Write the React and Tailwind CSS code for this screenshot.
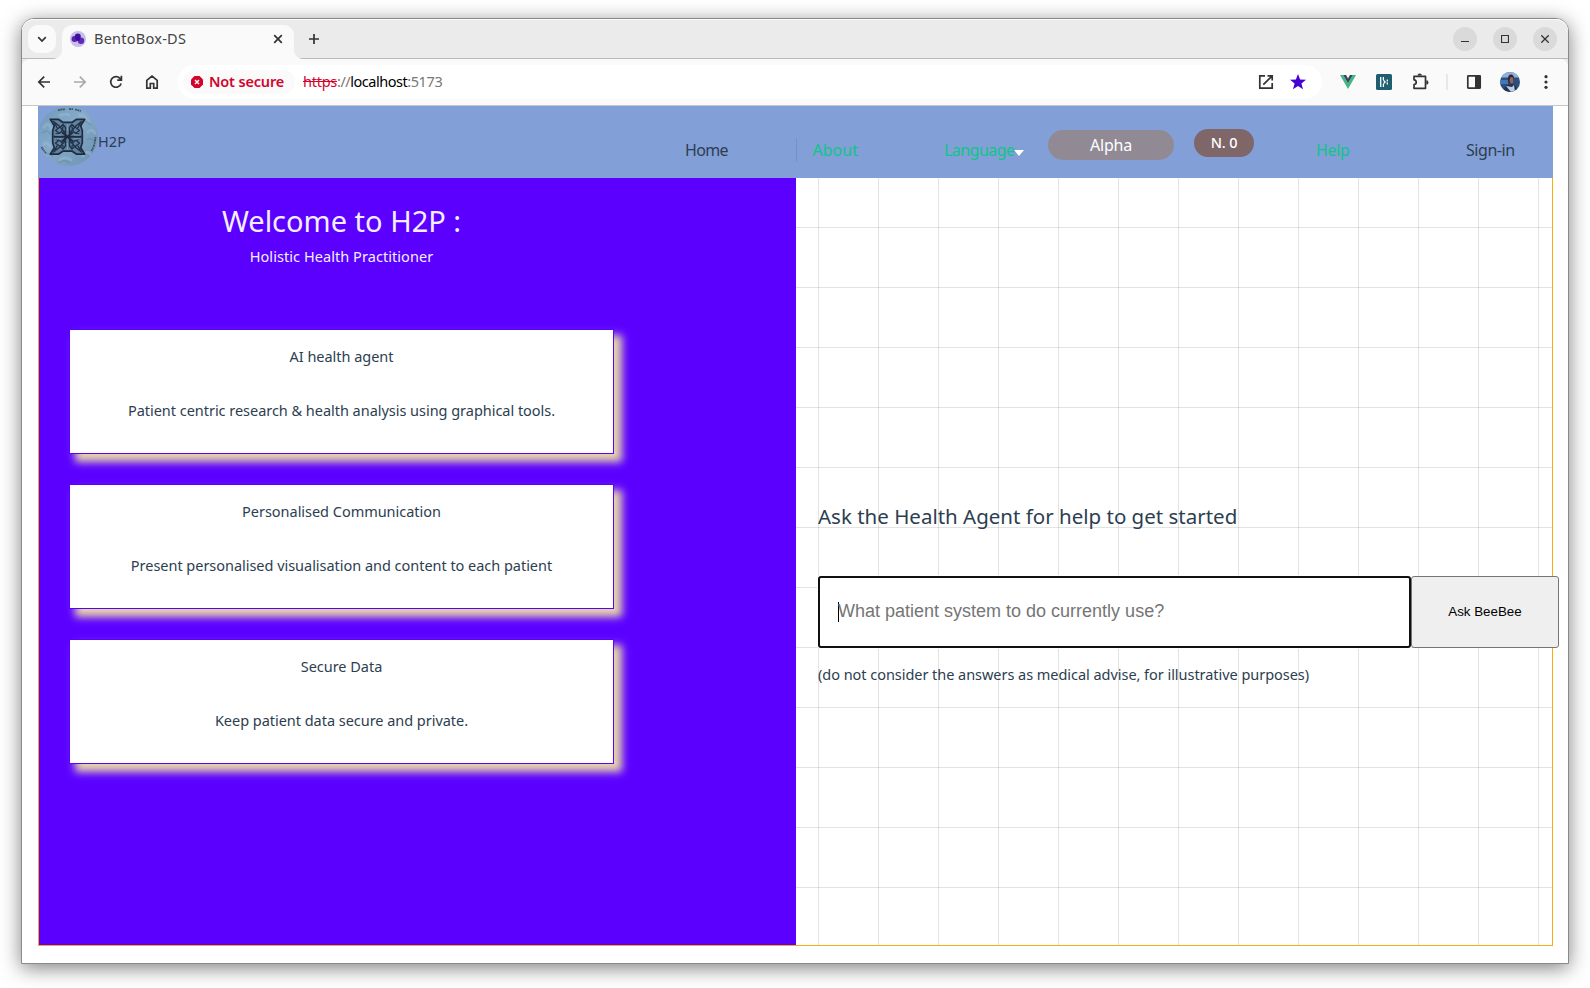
import React from "react";

const stroke = { fill: "none", stroke: "currentColor", strokeWidth: 1.7 };

function Favicon() {
  return (
    <svg className="h-4 w-4 shrink-0" viewBox="0 0 16 16">
      <circle cx="8" cy="8" r="8" fill="#c9bdea" />
      <circle cx="4.600" cy="8" r="3" fill="#5a22b4" />
      <circle cx="7.800" cy="5.600" r="3" fill="#43149a" />
      <circle cx="11" cy="9.800" r="3.200" fill="#5f2bb8" />
      <circle cx="8" cy="7.800" r="2.300" fill="#3f0c9c" />
    </svg>
  );
}

function TabStrip() {
  return (
    <div className="flex h-[40px] items-start rounded-t-[12px] border-b border-[#b9b9b9] bg-[#ebebeb] pl-[6px] shadow-[inset_0_1px_0_#fafafa]">
      <div className="mt-[6px] flex h-7 w-7 items-center justify-center rounded-[10px] bg-[#fafafa] text-[#333]">
        <svg className="h-3 w-3" viewBox="0 0 12 12">
          <path d="M2.2 4.2 6 8l3.8-3.8" {...stroke} />
        </svg>
      </div>
      <div className="relative ml-[6px] mt-[6px] flex h-[34px] w-[232px] items-center rounded-t-[10px] bg-[#fafafa] pb-[6px] pl-2">
        <svg className="absolute -left-[9px] bottom-0 h-[9px] w-[9px] text-[#fafafa]" viewBox="0 0 9 9">
          <path d="M9 0v9H0C5 9 9 5 9 0z" fill="currentColor" />
        </svg>
        <svg className="absolute -right-[9px] bottom-0 h-[9px] w-[9px] text-[#fafafa]" viewBox="0 0 9 9">
          <path d="M0 0v9h9C4 9 0 5 0 0z" fill="currentColor" />
        </svg>
        <Favicon />
        <span className="-mt-[2px] ml-2 text-[14.5px] leading-5 tracking-[0.25px] text-[#444]">BentoBox-DS</span>
        <svg className="ml-auto mr-[11px] h-[10px] w-[10px] text-[#333]" viewBox="0 0 10 10">
          <path d="m1.200 1.200 7.600 7.600m0-7.600L1.200 8.800" {...stroke} />
        </svg>
      </div>
      <svg className="ml-[15px] mt-[15px] h-[10px] w-[10px] text-[#333]" viewBox="0 0 10 10">
        <path d="M5 0v10M0 5h10" {...stroke} />
      </svg>
      <div className="ml-auto mr-[11px] mt-2 flex gap-4 text-[#333]">
        <div className="flex h-6 w-6 items-center justify-center rounded-full bg-[#dadada]">
          <svg className="h-2 w-2" viewBox="0 0 8 8"><path d="M0 6.5h8" fill="none" stroke="currentColor" /></svg>
        </div>
        <div className="flex h-6 w-6 items-center justify-center rounded-full bg-[#dadada]">
          <svg className="h-2 w-2" viewBox="0 0 8 8"><path d="M.5.5h7v7h-7z" fill="none" stroke="currentColor" strokeWidth="1.2" /></svg>
        </div>
        <div className="flex h-6 w-6 items-center justify-center rounded-full bg-[#dadada]">
          <svg className="h-2 w-2" viewBox="0 0 8 8"><path d="m.3.3 7.4 7.4m0-7.4L.3 7.7" fill="none" stroke="currentColor" strokeWidth="1.3" /></svg>
        </div>
      </div>
    </div>
  );
}

function Toolbar() {
  return (
    <div className="bg-[#ebebeb]">
      <div className="flex h-[47px] items-center rounded-t-[8px] border-b border-[#c6c6c6] bg-[#fafafa] pl-[14px] text-[#333]">
        <svg className="h-4 w-4 shrink-0" viewBox="0 0 16 16">
          <path d="M14 8H3.200M8.200 2.600 2.800 8l5.400 5.400" {...stroke} />
        </svg>
        <svg className="ml-5 h-4 w-4 shrink-0 text-[#a9a9a9]" viewBox="0 0 16 16">
          <path d="M2 8h10.800M7.800 2.600 13.200 8l-5.400 5.400" {...stroke} />
        </svg>
        <svg className="ml-5 h-4 w-4 shrink-0" viewBox="0 0 16 16">
          <path d="M13.100 9.400A5.300 5.300 0 1 1 11.900 4.300L13.400 6M13.400 1.800v4.300H9.200" {...stroke} />
        </svg>
        <svg className="ml-5 h-4 w-4 shrink-0" viewBox="0 0 16 16">
          <path d="M2.800 14.200V6.300L8 2.200l5.200 4.100v7.900h-3.500V9.500H6.300v4.700z" {...stroke} />
        </svg>
        <div className="ml-[18px] flex h-[34px] w-[1144px] shrink-0 items-center rounded-full bg-white pl-[5px] text-[14.5px] leading-5">
          <div className="flex h-6 w-[112px] items-center rounded-full bg-[#fafafa] pl-2 text-[#d2042d]">
            <svg className="h-3 w-3" viewBox="0 0 12 12">
              <path d="M3.500 0h5L12 3.500v5L8.500 12h-5L0 8.500v-5z" fill="currentColor" />
              <path d="m4 4 4 4m0-4L4 8" fill="none" stroke="#fff" strokeWidth="1.4" />
            </svg>
            <span className="-mt-[2px] ml-[6px] whitespace-nowrap font-semibold tracking-[-0.17px]">Not secure</span>
          </div>
          <div className="-mt-[2px] ml-2 flex whitespace-nowrap text-[#777]">
            <span className="tracking-[-0.26px] text-[#d2042d] line-through">https</span>
            <span className="tracking-[-0.5px]">://</span>
            <span className="tracking-[-0.47px] text-black">localhost</span>
            <span className="tracking-[-0.4px]">:5173</span>
          </div>
          <svg className="ml-auto h-4 w-4" viewBox="0 0 16 16">
            <path d="M7 1.800H1.800v12.400h12.400V9M9.500 1.800h4.700v4.700M14.200 1.800 5.300 10.700" {...stroke} />
          </svg>
          <svg className="ml-4 mr-4 h-4 w-4" viewBox="0 0 16 16">
            <path d="m8 0 2.100 5.500 5.900.3-4.600 3.700L13 15.300l-5-3.300-5 3.300 1.600-5.800L0 5.800l5.900-.3z" fill="#4500d6" />
          </svg>
        </div>
        <svg className="ml-[18px] h-[14px] w-4 shrink-0" viewBox="0 0 16 14">
          <path d="M0 0h3.200L8 8.300 12.800 0H16L8 13.900z" fill="#41b883" />
          <path d="M3.200 0h2.900L8 3.400 9.900 0h2.900L8 8.300z" fill="#35495e" />
        </svg>
        <svg className="ml-5 h-4 w-4 shrink-0" viewBox="0 0 16 16">
          <rect width="16" height="16" rx="1.500" fill="#1e5e70" />
          <path d="M4.700 3v10M7.400 3v3M7.400 10v3M11.300 5.500v2M11.300 8.500v2" stroke="#fff" strokeWidth="1.300" />
          <path d="M7.400 6.300 9.200 8 7.400 9.700" fill="none" stroke="#fff" strokeWidth="1.200" />
        </svg>
        <svg className="ml-5 h-[18px] w-[18px] shrink-0" viewBox="0 0 18 18">
          <path d="M2 3.400h11.500v11.900H2v-3.800c3-.4 3-4.300 0-4.700z" {...stroke} strokeLinejoin="round" />
          <path d="M5.500 2.600a2.200 2.200 0 0 1 4.400 0zM14.300 7.200a2.200 2.200 0 0 1 0 4.400z" fill="currentColor" />
        </svg>
        <div className="ml-[16px] h-4 w-[2px] shrink-0 bg-[#e8e8e8]" />
        <svg className="ml-[18px] h-4 w-4 shrink-0" viewBox="0 0 16 16">
          <rect x="1.800" y="1.800" width="12.400" height="12.400" rx=".6" {...stroke} />
          <path d="M9 1.500h5.500v13H9z" fill="currentColor" />
        </svg>
        <svg className="ml-[18px] h-5 w-5 shrink-0" viewBox="0 0 20 20">
          <defs>
            <clipPath id="face"><circle cx="10" cy="10" r="10" /></clipPath>
          </defs>
          <g clipPath="url(#face)">
            <path d="M0 0h20v20H0z" fill="#2c4f80" />
            <path d="M0 0h20v5.500H0z" fill="#8fb0dc" />
            <path d="M0 8h8v4H0z" fill="#4878b4" />
            <path d="M3 20c1-5 4-8 8-8s6 3 7 8z" fill="#26344f" />
            <path d="m6 14 5 6h4l-1-7-2 2z" fill="#b9cfea" />
            <ellipse cx="11" cy="7" rx="3" ry="4.600" fill="#33242c" />
            <ellipse cx="11.600" cy="8.200" rx="1.900" ry="3.200" fill="#8f655f" />
          </g>
        </svg>
        <svg className="ml-[18px] h-4 w-4 shrink-0" viewBox="0 0 16 16" fill="currentColor">
          <circle cx="8" cy="2.700" r="1.600" />
          <circle cx="8" cy="8" r="1.600" />
          <circle cx="8" cy="13.300" r="1.600" />
        </svg>
      </div>
    </div>
  );
}

function KnotQuarter() {
  return (
    <g fill="none" strokeLinejoin="round" strokeLinecap="round">
      <path d="M12.300 13.300h8l4.500 3h4.500M12.300 13.300l4 6.500-1.600 5v6" stroke="#1e2c3d" strokeWidth="1.700" />
      <path d="M15.500 15.500l7 5.500 2.500-2.500M16 16l3 5.500M18 24l4-3 5.500 6M18 28c4 0 6.500-2 7-7M25 18.500l2.500 3v7M21 27l-3.500-2.500" stroke="#223246" strokeWidth="1.400" />
    </g>
  );
}

function Logo() {
  return (
    <svg className="h-[60px] w-[60px] shrink-0" viewBox="0 0 60 60">
      <defs>
        <linearGradient id="disc" x1="0" y1="0" x2="1" y2="1">
          <stop offset="0" stopColor="#6f97ba" />
          <stop offset=".45" stopColor="#86abc9" />
          <stop offset="1" stopColor="#6c90b0" />
        </linearGradient>
      </defs>
      <circle cx="30" cy="30" r="30" fill="url(#disc)" />
      <g fill="none" stroke="#9bbdd6" strokeWidth="3" strokeLinecap="round" opacity=".45">
        <path d="M6 21c4-5 6-2 7 2M42 9c5-1 6 4 9 6M50 26c3-3 5-2 7 1M6 38c3-3 4 0 6 2M22 54c3-3 8-3 11 0M45 50c2-4 5-5 7-2M22 9c4 0 6-2 9 0" />
      </g>
      <g fill="none" stroke="#557a9c" strokeWidth="1.500" opacity=".35">
        <path d="M4 27c4-3 7-2 9 2M44 14c4 0 5 3 9 5M49 34c3-3 5-1 7 1M20 57c4-3 8-3 12 0M8 48c3-2 5 0 7 3" />
      </g>
      <g fill="none" stroke="#3f5771" strokeWidth="1.800">
        <path d="M20 4.500q3-1 7-1.500M31 3l4 .2M37 3.500l6 1.500" strokeDasharray="2 .5" />
        <path d="M57.500 31q-.5 8-4 14" strokeDasharray="1.500 .6 2.500 .8" />
        <path d="M3.500 41q1.500 3 4.500 6" strokeDasharray="1.500 .5" />
      </g>
      <path d="M12 13h9l4 3h9l4-3h9l-4 7 1.500 5v12L43 41.500l4 7h-9l-4-3h-9l-4 3h-9l4-7-1.500-4.500V25l1.500-5z" fill="#58789a" opacity=".8" />
      <KnotQuarter />
      <g transform="matrix(-1 0 0 1 59 0)"><KnotQuarter /></g>
      <g transform="matrix(1 0 0 -1 0 61.500)"><KnotQuarter /></g>
      <g transform="matrix(-1 0 0 -1 59 61.500)"><KnotQuarter /></g>
      <path d="M16 30.700h27M24 26l11 9.500M35 26l-11 9.500" fill="none" stroke="#1e2c3d" strokeWidth="2" />
      <path d="M29.500 18v7M29.500 37v7M17 29h6M36 29h6M17 33h6M36 33h6" fill="none" stroke="#85a6c1" strokeWidth=".8" />
    </svg>
  );
}

function Header() {
  return (
    <header className="flex h-[72px] w-[1515px] items-start bg-[#839fd7] text-[#2c3e50]">
      <Logo />
      <span className="mt-[25px] w-[587px] text-[14.5px] leading-5 tracking-[0.1px]">H2P</span>
      <nav className="flex items-start text-base leading-6">
        <a className="mt-8 h-6 w-[112px] border-r border-[#7690c8] tracking-[-0.7px]">Home</a>
        <a className="ml-[15.5px] mt-8 w-[131.500px] text-[#0fc587]">About</a>
        <a className="mt-8 flex w-[104px] items-center whitespace-nowrap tracking-[-0.55px] text-[#0fc587]">
          Language
          <svg className="mt-[6px] h-[6px] w-[10px] shrink-0" viewBox="0 0 10 6">
            <path d="M0 0h10L5 6z" fill="#fff" />
          </svg>
        </a>
        <span className="mt-6 h-[30px] w-[126px] rounded-full bg-[#918a95] text-center leading-[30px] tracking-[-0.25px] text-white">Alpha</span>
        <span className="ml-5 mt-[23px] h-7 w-[60px] rounded-full bg-[#7e6669] text-center text-[14.5px] font-medium leading-[27px] tracking-[-0.2px] text-white">N. 0</span>
        <a className="ml-[62px] mt-8 w-[150px] tracking-[-0.3px] text-[#0fc587]">Help</a>
        <a className="mt-8 whitespace-nowrap tracking-[-0.45px]">Sign-in</a>
      </nav>
    </header>
  );
}

const features = [
  ["AI health agent", "Patient centric research & health analysis using graphical tools."],
  ["Personalised Communication", "Present personalised visualisation and content to each patient"],
  ["Secure Data", "Keep patient data secure and private."],
];

function WelcomePanel() {
  return (
    <section className="w-[757px] shrink-0 bg-[#5b00ff] pl-[30px] pt-[25px] text-center text-[14.5px] leading-5 text-[#2c3e50]">
      <div className="w-[545px] text-[#f3efff]">
        <h1 className="text-[29px] leading-9">Welcome to H2P :</h1>
        <p className="mt-[7px] tracking-[0.06px]">Holistic Health Practitioner</p>
      </div>
      <div className="mt-[63px] flex flex-col gap-[30px]">
        {features.map(([title, text]) => (
          <article
            key={title}
            className="h-[125px] w-[545px] border border-[#5b00ff] bg-white pt-4 tracking-[-0.03px] shadow-[7px_7px_8px_1px_#e6d5ab]"
          >
            <h2>{title}</h2>
            <p className="mt-[34px]">{text}</p>
          </article>
        ))}
      </div>
    </section>
  );
}

function AskPanel() {
  return (
    <section className="w-[756px] shrink-0 bg-[linear-gradient(to_right,rgba(0,0,0,0.11)_1px,transparent_1px),linear-gradient(to_bottom,rgba(0,0,0,0.11)_1px,transparent_1px)] bg-size-[60px_60px] bg-position-[22px_49px] pl-[22px] pt-[324px] text-[#2c3e50]">
      <h2 className="text-[20.5px] leading-7">Ask the Health Agent for help to get started</h2>
      <form className="mt-[46px] flex h-[72px] w-[741px] font-['Liberation_Sans',sans-serif]">
        <div className="flex w-[593px] items-center rounded-[3px] border-2 border-[#101010] bg-white pb-px pl-[18px] text-[18px] text-[#757575] shadow-[0_0_0_1px_#fff]">
          <span className="h-5 w-px bg-black" />
          <span className="-ml-px -mt-px whitespace-nowrap">What patient system to do currently use?</span>
        </div>
        <button type="button" className="z-10 w-[148px] rounded-[3px] border border-[#767676] bg-[#efefef] pb-px text-[13.333px] text-black">
          Ask BeeBee
        </button>
      </form>
      <p className="mt-4 text-[14.5px] leading-5 tracking-[-0.04px]">
        (do not consider the answers as medical advise, for illustrative purposes)
      </p>
    </section>
  );
}

export default function App() {
  return (
    <div className="h-[988px] w-[1590px] overflow-hidden bg-white pl-[21px] pt-[18px] font-['Noto_Sans',sans-serif]">
      <div className="h-[946px] w-[1548px] rounded-t-[13px] border border-[#8a8a8a] bg-white shadow-[0_4px_20px_rgba(0,0,0,0.5)]">
        <TabStrip />
        <Toolbar />
        <main className="pl-4">
          <Header />
          <div className="flex h-[768px] w-[1515px] border border-t-0 border-[#fbab0c]">
            <WelcomePanel />
            <AskPanel />
          </div>
        </main>
      </div>
    </div>
  );
}
